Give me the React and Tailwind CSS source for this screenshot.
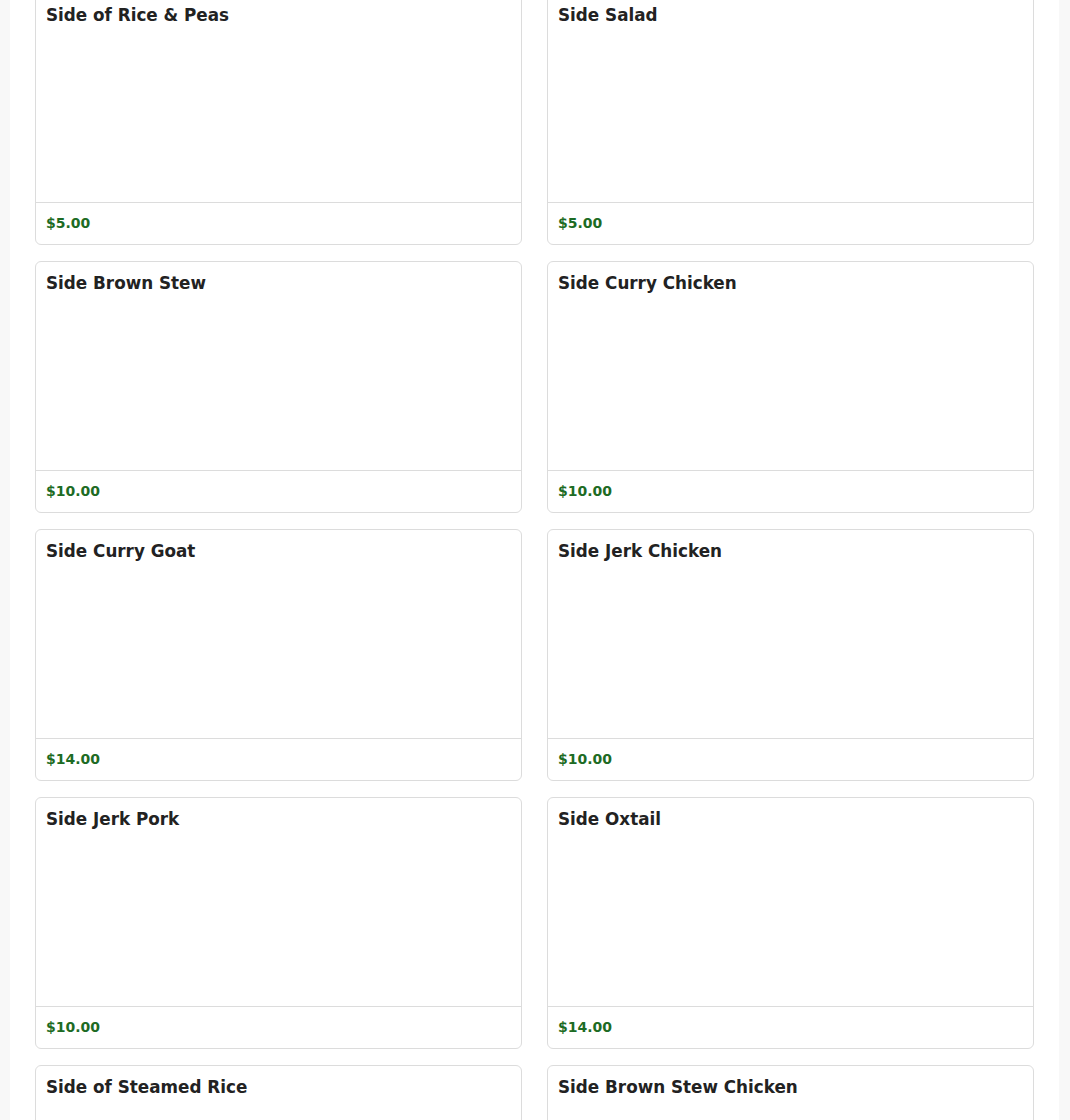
import React from 'react';

// Side dishes shown on the menu page
const sides = [
  { name: 'Side of Rice & Peas', price: 5 },
  { name: 'Side Salad', price: 5 },
  { name: 'Side Brown Stew', price: 10 },
  { name: 'Side Curry Chicken', price: 10 },
  { name: 'Side Curry Goat', price: 14 },
  { name: 'Side Jerk Chicken', price: 10 },
  { name: 'Side Jerk Pork', price: 10 },
  { name: 'Side Oxtail', price: 14 },
  { name: 'Side of Steamed Rice', price: 5 },
  { name: 'Side Brown Stew Chicken', price: 14 },
];

const MenuCard = ({ item }) => (
  <div className="flex flex-col h-[252px] border border-[#dcdcdc] rounded-md bg-white overflow-hidden">
    <div className="flex-1 px-[10px] pt-[9px]">
      <h3 className="text-[16.8px] leading-[24px] font-bold text-[#222]">{item.name}</h3>
    </div>
    <div className="h-[42px] border-t border-[#dcdcdc] px-[10px] flex items-center">
      <span className="text-[14px] font-bold text-[#1d6b24]">${item.price.toFixed(2)}</span>
    </div>
  </div>
);

export default function App() {
  return (
    <div className="min-h-screen bg-[#f8f8f8] overflow-hidden" style={{ fontFamily: '"DejaVu Sans", sans-serif' }}>
      <div className="ml-[10px] mr-[11px] bg-white px-[25px] -mt-[7px] pb-10">
        <div className="grid grid-cols-2 gap-x-[25px] gap-y-4">
          {sides.map((item) => (
            <MenuCard key={item.name} item={item} />
          ))}
        </div>
      </div>
    </div>
  );
}
